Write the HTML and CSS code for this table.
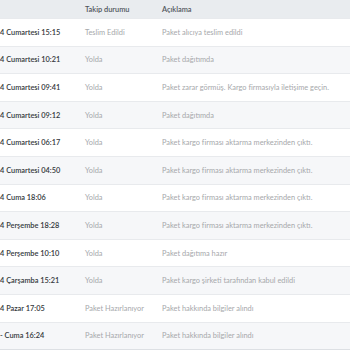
FILE: index.html
```html
<!DOCTYPE html>
<html lang="tr">
<head>
<meta charset="utf-8">
<link rel="stylesheet" href="styles.css">
</head>
<body>
<div class="wrap">
<table class="tbl">
<colgroup><col class="c1"><col class="c2"><col class="c3"></colgroup>
<thead>
<tr><th></th><th>Takip durumu</th><th>Açıklama</th></tr>
</thead>
<tbody>
<tr><td class="date">4 Cumartesi 15:15</td><td>Teslim Edildi</td><td>Paket alıcıya teslim edildi</td></tr>
<tr><td class="date">4 Cumartesi 10:21</td><td>Yolda</td><td>Paket dağıtımda</td></tr>
<tr><td class="date">4 Cumartesi 09:41</td><td>Yolda</td><td>Paket zarar görmüş. Kargo firmasıyla iletişime geçin.</td></tr>
<tr><td class="date">4 Cumartesi 09:12</td><td>Yolda</td><td>Paket dağıtımda</td></tr>
<tr><td class="date">4 Cumartesi 06:17</td><td>Yolda</td><td>Paket kargo firması aktarma merkezinden çıktı.</td></tr>
<tr><td class="date">4 Cumartesi 04:50</td><td>Yolda</td><td>Paket kargo firması aktarma merkezinden çıktı.</td></tr>
<tr><td class="date">4 Cuma 18:06</td><td>Yolda</td><td>Paket kargo firması aktarma merkezinden çıktı.</td></tr>
<tr><td class="date">4 Perşembe 18:28</td><td>Yolda</td><td>Paket kargo firması aktarma merkezinden çıktı.</td></tr>
<tr><td class="date">4 Perşembe 10:10</td><td>Yolda</td><td>Paket dağıtıma hazır</td></tr>
<tr><td class="date">4 Çarşamba 15:21</td><td>Yolda</td><td>Paket kargo şirketi tarafından kabul edildi</td></tr>
<tr><td class="date">4 Pazar 17:05</td><td>Paket Hazırlanıyor</td><td>Paket hakkında bilgiler alındı</td></tr>
<tr><td class="date">- Cuma 16:24</td><td>Paket Hazırlanıyor</td><td>Paket hakkında bilgiler alındı</td></tr>
</tbody>
</table>
</div>
</body>
</html>
```
FILE: styles.css
```css
html, body {
  margin: 0;
  padding: 0;
  background: #ffffff;
}
body {
  font-family: Lato, "Open Sans", "Liberation Sans", sans-serif;
  font-size: 7.4px;
  color: #a6a8ab;
}
.wrap {
  width: 350px;
  overflow: hidden;
}
.tbl {
  width: 350px;
  border-collapse: collapse;
  table-layout: fixed;
}
.c1 { width: 85px; }
.c2 { width: 77px; }
.tbl th {
  height: 18px;
  padding: 0;
  background: #e9ecef;
  color: #50555b;
  font-weight: 600;
  text-align: left;
  vertical-align: middle;
}
.tbl td {
  height: 26.6px;
  padding: 0;
  border-top: 1px solid #e8eaed;
  vertical-align: middle;
  white-space: nowrap;
}
.tbl tbody tr:nth-child(even) td {
  background: #f6f7f9;
}
.tbl tbody tr:last-child td {
  border-bottom: 1px solid #dde0e4;
}
.tbl td.date {
  color: #33373b;
  font-weight: 600;
}
```
